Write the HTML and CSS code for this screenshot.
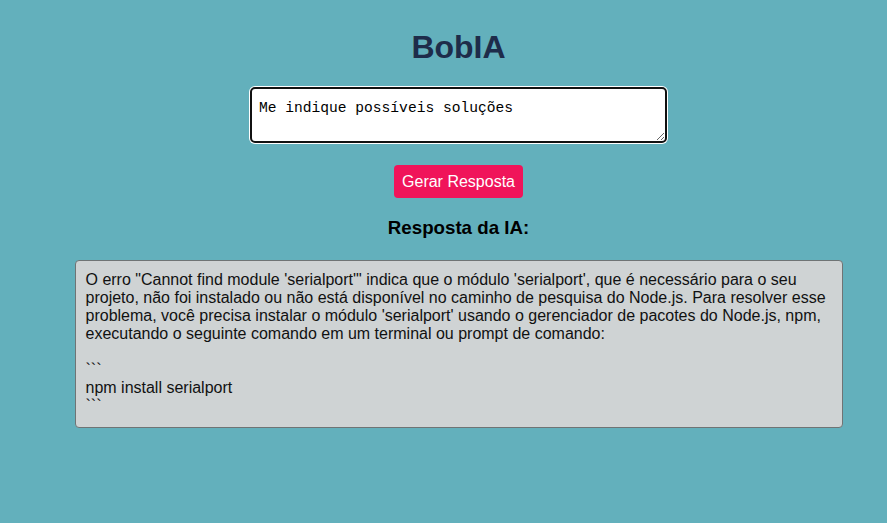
FILE: index.html
```html
<!DOCTYPE html>
<html lang="pt-BR">
<head>
<meta charset="utf-8">
<title>BobIA</title>
<link rel="stylesheet" href="styles.css">
</head>
<body>
<main class="app">
  <h1 class="title">BobIA</h1>
  <textarea class="prompt">Me indique possíveis soluções</textarea>
  <button class="btn">Gerar Resposta</button>
  <h3 class="subtitle">Resposta da IA:</h3>
  <div class="answer">O erro "Cannot find module 'serialport'" indica que o módulo 'serialport', que é necessário para o seu projeto, não foi instalado ou não está disponível no caminho de pesquisa do Node.js. Para resolver esse problema, você precisa instalar o módulo 'serialport' usando o gerenciador de pacotes do Node.js, npm, executando o seguinte comando em um terminal ou prompt de comando:

&#96;&#96;&#96;
npm install serialport
&#96;&#96;&#96;</div>
</main>
</body>
</html>
```

FILE: styles.css
```css
html {
  margin: 0;
  padding: 0;
  background: #63b0bc;
  min-height: 100%;
}
body {
  margin: 0;
  padding: 0;
  background: #63b0bc;
  font-family: "Liberation Sans", Arial, sans-serif;
  min-height: 523px;
}
.app {
  display: flex;
  flex-direction: column;
  align-items: center;
  padding: 8px 8px 0 38px;
}
.title {
  margin: 21px 0 21px;
  font-size: 32px;
  line-height: 37px;
  font-weight: bold;
  color: #1e2c4a;
}
.prompt {
  box-sizing: border-box;
  width: 417px;
  height: 56px;
  margin: 0;
  padding: 10px 7px 6px;
  border: 2px solid #111;
  border-radius: 5px;
  box-shadow: 0 0 0 1px #fff;
  background: #fff;
  font-family: "Liberation Mono", "DejaVu Sans Mono", monospace;
  font-size: 14.6px;
  line-height: 18px;
  color: #000;
  resize: vertical;
  outline: none;
}
.btn {
  margin: 22px 0 0;
  height: 33px;
  padding: 0 8px;
  border: none;
  border-radius: 4px;
  background: #f0145a;
  color: #fff;
  font-family: "Liberation Sans", Arial, sans-serif;
  font-size: 16px;
}
.subtitle {
  margin: 19px 0 21px;
  font-size: 18.72px;
  line-height: 22px;
  font-weight: bold;
  color: #000;
}
.answer {
  box-sizing: border-box;
  width: 768px;
  padding: 10px 10px 12px;
  border: 1px solid #6f7475;
  border-radius: 4px;
  background: #cfd3d4;
  color: #111;
  font-size: 16px;
  line-height: 18px;
  white-space: pre-wrap;
}
```
